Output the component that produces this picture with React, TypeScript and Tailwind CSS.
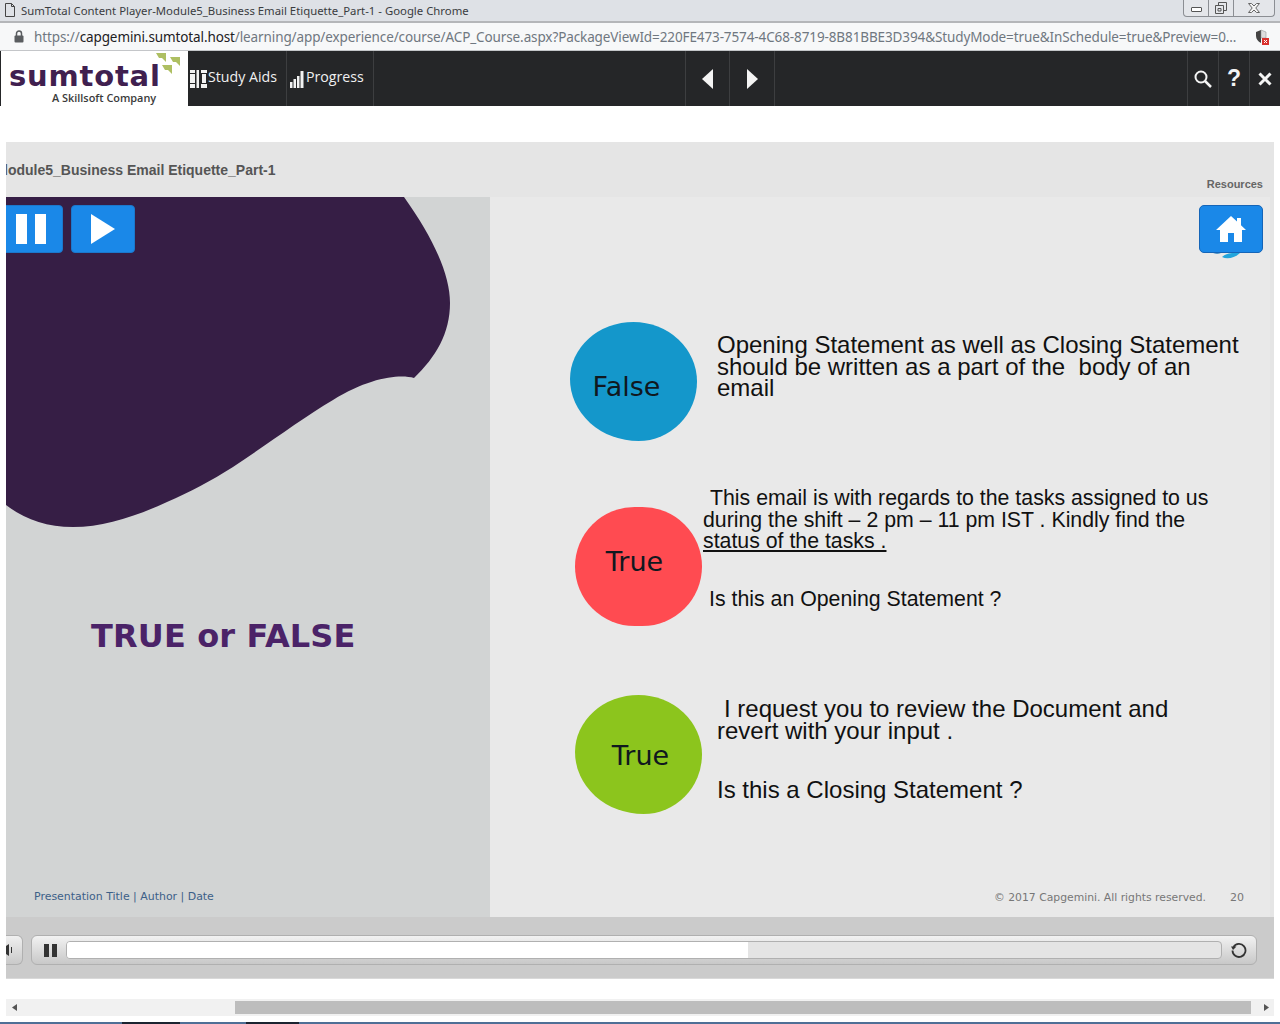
import React from "react";

const Blob = () => (
  <svg className="absolute left-0 top-0" width="484" height="340" viewBox="0 0 484 340">
    <path
      d="M0 0 L398 0 C428 42 444 78 444 106 C444 136 430 160 408 181 C394 177 364 180 327 203 C295 222 262 247 227 270 C205 284 184 295 161 305 C128 320 98 330 67 330 C40 330 18 322 0 308 Z"
      fill="#361e45"
    />
  </svg>
);

const Circle = ({ color, label, shape }: { color: string; label: string; shape: string }) => (
  <div className={`absolute flex items-center justify-center ${color} ${shape}`}>
    <span className="font-['DejaVu_Sans',sans-serif] text-[27px] text-[#10181f]">{label}</span>
  </div>
);

export default function App() {
  return (
    <div className="w-[1280px] h-[1024px] overflow-hidden bg-white flex flex-col relative font-['Open_Sans',sans-serif]">
      {/* title bar */}
      <div className="h-[23px] bg-[#dee1e6] border-b-2 border-[#b4b6b9] flex items-start shrink-0 relative">
        <svg className="ml-[4px] mt-[3px] shrink-0" width="12" height="14" viewBox="0 0 12 14" fill="none" stroke="#444" strokeWidth="1">
          <path d="M1.5 .5H7.5L10.5 3.5V13.5H1.5Z M7.5 .5V3.5H10.5" />
        </svg>
        <span className="ml-[5px] text-[11.35px] leading-[21px] text-[#3a3c3f] font-['Noto_Sans',sans-serif] whitespace-nowrap">
          SumTotal Content Player-Module5_Business Email Etiquette_Part-1 - Google Chrome
        </span>
        <div className="ml-auto mr-[5px] flex h-[17px] w-[92px] border border-t-0 border-[#8b8e93] rounded-b-[4px] bg-[#e4e6ea] shrink-0">
          <div className="w-[25px] border-r border-[#8b8e93] flex items-center justify-center">
            <div className="w-[11px] h-[5px] mt-[3px] border border-[#555] rounded-[1px] bg-white" />
          </div>
          <div className="w-[25px] border-r border-[#8b8e93] flex items-center justify-center">
            <svg width="12" height="12" viewBox="0 0 12 12" fill="none" stroke="#555"><path d="M3.5 3V.5H11.5V8.5H9M.5 3.5H8.5V11.5H.5Z M3 6.5H6V9H3Z" /></svg>
          </div>
          <div className="flex-1 flex items-center justify-center">
            <svg width="12" height="10" viewBox="0 0 12 10" fill="#f4f4f4" stroke="#666"><path d="M.5 .5H3.5L6 3L8.5 .5H11.5L7.8 5L11.5 9.5H8.5L6 7L3.5 9.5H.5L4.2 5Z" /></svg>
          </div>
        </div>
      </div>

      {/* url bar */}
      <div className="h-[28px] bg-[#f7f8f9] border-b border-[#c4c6c9] flex items-center shrink-0">
        <svg className="ml-[14px] shrink-0" width="10" height="13" viewBox="0 0 10 13">
          <path d="M2.5 6V3.5a2.5 2.5 0 0 1 5 0V6" fill="none" stroke="#5a5d60" strokeWidth="1.5" />
          <rect x="0.5" y="5.5" width="9" height="7" rx="1" fill="#5a5d60" />
        </svg>
        <span className="ml-[10px] mt-[2px] text-[13.5px] text-[#6f7780] font-['Noto_Sans',sans-serif] whitespace-nowrap tracking-[-0.11px]">
          https://<span className="text-[#1d2023]">capgemini.sumtotal.host</span>/learning/app/experience/course/ACP_Course.aspx?PackageViewId=220FE473-7574-4C68-8719-8B81BBE3D394&amp;StudyMode=true&amp;InSchedule=true&amp;Preview=0...
        </span>
        <svg className="ml-auto mr-[11px] shrink-0" width="14" height="16" viewBox="0 0 14 16">
          <path d="M6 1L1 3V7C1 10 3 12.5 6 14Z" fill="#444" />
          <path d="M6 1L11 3V9H6Z" fill="#ddd" stroke="#888" strokeWidth=".5" />
          <rect x="7" y="9" width="7" height="7" fill="#d9302c" />
          <path d="M9 11L12 14M12 11L9 14" stroke="#fff" strokeWidth="1" />
        </svg>
      </div>

      {/* nav */}
      <div className="h-[55px] bg-[#252628] flex items-stretch shrink-0 text-white">
        <div className="w-[188px] bg-white border-l border-[#252628] relative shrink-0">
          <span className="absolute left-[8px] top-[4px] text-[#40204f] font-['DejaVu_Sans',sans-serif] font-bold text-[29px] leading-[42px] tracking-[0.8px]">sumtotal</span>
          <svg className="absolute left-[154px] top-[2px]" width="26" height="22" viewBox="0 0 26 22" fill="#aebf62">
            <path d="M1 0H11V9L7 5H4Z M15 4H25V13L21 9H18Z M7 12H17V21L13 17H10Z" />
          </svg>
          <span className="absolute left-[51px] top-[40px] text-[#3a3a3a] font-['Open_Sans',sans-serif] font-semibold text-[10.9px] leading-[14px] whitespace-nowrap">A Skillsoft Company</span>
        </div>
        <div className="w-[99px] border-r border-[#3d3e40] flex items-center pl-[2px] shrink-0">
          <svg width="18" height="18" viewBox="0 0 18 18" fill="#f2f2f2" className="shrink-0">
            <path d="M0 0H5V3H0ZM0 4H5V13H0ZM0 14H5V18H0ZM6.5 0H9V18H6.5ZM11 0H17V3H11ZM12 4H16V13H12ZM11 14H17V18H11Z" />
          </svg>
          <span className="text-[14.2px] leading-[18px] text-[#f0f0f0] -mt-[3px] whitespace-nowrap">Study Aids</span>
        </div>
        <div className="w-[87px] border-r border-[#3d3e40] flex items-center pl-[3px] shrink-0">
          <svg width="15" height="18" viewBox="0 0 15 18" fill="#f2f2f2" className="mt-[1px] shrink-0">
            <path d="M0 12H2.5V18H0ZM3.5 9H6V18H3.5ZM7 6H9.5V18H7ZM10.5 1H13.5V18H10.5Z" />
          </svg>
          <span className="ml-[1px] text-[14.2px] leading-[18px] text-[#f0f0f0] -mt-[3px] whitespace-nowrap">Progress</span>
        </div>
        <div className="w-[312px] border-r border-[#3d3e40] shrink-0" />
        <div className="w-[44px] border-r border-[#3d3e40] flex items-center justify-center shrink-0">
          <svg width="12" height="20" viewBox="0 0 12 20" fill="#f4f4f4"><path d="M11 0V20L0 10Z" /></svg>
        </div>
        <div className="w-[45px] border-r border-[#3d3e40] flex items-center justify-center shrink-0">
          <svg width="12" height="20" viewBox="0 0 12 20" fill="#f4f4f4"><path d="M1 0V20L12 10Z" /></svg>
        </div>
        <div className="flex-1" />
        <div className="w-[31px] border-l border-[#3d3e40] flex items-center justify-center">
          <svg width="18" height="18" viewBox="0 0 18 18" fill="none" stroke="#f4f4f4" strokeWidth="2"><circle cx="7" cy="7" r="5.5" /><path d="M11 11L17 17" strokeWidth="2.5" /></svg>
        </div>
        <div className="w-[31px] border-l border-[#3d3e40] flex items-center justify-center">
          <span className="font-['Liberation_Sans',sans-serif] font-bold text-[23px] leading-none text-[#f4f4f4]">?</span>
        </div>
        <div className="w-[31px] border-l border-[#3d3e40] flex items-center justify-center">
          <svg width="14" height="14" viewBox="0 0 14 14" stroke="#f4f4f4" strokeWidth="3"><path d="M1.5 1.5L12.5 12.5M12.5 1.5L1.5 12.5" /></svg>
        </div>
      </div>

      {/* player */}
      <div className="mt-[36px] ml-[6px] w-[1268px] shrink-0 bg-[#e5e5e5] flex flex-col">
        <div className="h-[55px] relative flex overflow-hidden">
          <span className="mt-[19px] ml-[-2px] font-['Liberation_Sans',sans-serif] font-bold text-[14px] leading-[18px] text-[#555] whitespace-nowrap">
            lodule5_Business Email Etiquette_Part-1
          </span>
          <span className="ml-auto mr-[11px] mt-[35px] font-['Liberation_Sans',sans-serif] font-bold text-[11px] leading-[14px] text-[#666]">Resources</span>
        </div>

        <div className="flex h-[720px] pr-[4px]">
          {/* left */}
          <div className="w-[484px] bg-[#d2d4d4] relative shrink-0 overflow-hidden">
            <Blob />
            <div className="relative flex gap-[8px] pt-[8px] -ml-[7px]">
              <div className="w-[64px] h-[48px] bg-[#1a88e8] border border-[#1b78cc] rounded-[4px] flex items-center justify-center gap-[8px]">
                <div className="w-[11px] h-[30px] bg-white" />
                <div className="w-[11px] h-[30px] bg-white" />
              </div>
              <div className="w-[64px] h-[48px] bg-[#1a88e8] border border-[#1b78cc] rounded-[4px] flex items-center justify-center">
                <svg width="26" height="30" viewBox="0 0 26 30" fill="#fff"><path d="M1 0L25 15L1 30Z" /></svg>
              </div>
            </div>
            <div className="absolute left-[85px] top-[420px] font-['DejaVu_Sans',sans-serif] font-bold text-[32px] leading-[38px] text-[#4b2368] whitespace-nowrap tracking-[0.15px]">
              TRUE or FALSE
            </div>
            <div className="absolute left-[28px] top-[692px] font-['DejaVu_Sans',sans-serif] text-[10.95px] leading-[15px] text-[#3c6088] whitespace-nowrap">
              Presentation Title | Author | Date
            </div>
          </div>

          {/* right */}
          <div className="flex-1 bg-[#e9e9e9] relative font-['Liberation_Sans',sans-serif] text-[#111]">
            <svg className="absolute left-[718px] top-[54px]" width="34" height="10" viewBox="0 0 34 10">
              <path d="M1 0H16C13 3 7 4 1 0Z" fill="#1676b8" />
              <path d="M14 6C18 2 26 1 32 2C28 6 20 9 14 6Z" fill="#22a5dc" />
            </svg>
            <div className="absolute left-[709px] top-[8px] w-[64px] h-[48px] bg-[#1a88e8] border border-[#1565b8] rounded-[5px] flex items-center justify-center">
              <svg width="30" height="28" viewBox="0 0 30 28" fill="#fff"><path d="M15 1L21 6.5V3H25V10.3L30 15H26V27H18V18H12V27H4V15H0Z" /></svg>
            </div>

            <Circle color="bg-[#1497cb]" shape="left-[80px] top-[125px] w-[127px] h-[119px] rounded-[50%_50%_46%_54%/48%_50%_50%_52%] pr-[14px] pt-[11px]" label="False" />
            <div className="absolute left-[227px] top-[137px] text-[24px] leading-[21.5px] whitespace-nowrap">
              <div>Opening Statement as well as Closing Statement</div>
              <div>should be written as a part of the&nbsp; body of an</div>
              <div>email</div>
            </div>

            <Circle color="bg-[#ff4b51]" shape="left-[85px] top-[310px] w-[127px] h-[119px] rounded-full pr-[8px] pb-[9px]" label="True" />
            <div className="absolute left-[213px] top-[291px] text-[21.3px] leading-[21.5px] whitespace-nowrap">
              <div className="pl-[7px]">This email is with regards to the tasks assigned to us</div>
              <div>during the shift – 2 pm – 11 pm IST . Kindly find the</div>
              <div className="underline">status of the tasks .</div>
              <div className="pl-[6px] mt-[36.5px]">Is this an Opening Statement ?</div>
            </div>

            <Circle color="bg-[#8cc51d]" shape="left-[85px] top-[498px] w-[127px] h-[119px] rounded-[50%_50%_46%_54%/48%_50%_50%_52%] pt-[3px] pl-[4px]" label="True" />
            <div className="absolute left-[227px] top-[501px] text-[24px] leading-[21.5px] whitespace-nowrap">
              <div className="pl-[7px]">I request you to review the Document and</div>
              <div>revert with your input .</div>
              <div className="mt-[38px]">Is this a Closing Statement ?</div>
            </div>

            <div className="absolute left-[504px] top-[693px] font-['DejaVu_Sans',sans-serif] text-[10.8px] leading-[16px] text-[#777] whitespace-nowrap">
              © 2017 Capgemini. All rights reserved.
            </div>
            <div className="absolute left-[740px] top-[693px] font-['DejaVu_Sans',sans-serif] text-[11px] leading-[16px] text-[#777]">20</div>
          </div>
        </div>

        {/* controls */}
        <div className="h-[62px] bg-[#cbcbcb] border-b border-[#d9d9d9] flex items-start pt-[18px] overflow-hidden">
          <div className="w-[17px] h-[30px] border border-l-0 border-[#b0b0b0] rounded-r-[6px] bg-gradient-to-b from-[#f0f0f0] to-[#c9c9c9] flex items-center shrink-0">
            <svg width="8" height="12" viewBox="0 0 8 12" fill="#333" className="shrink-0"><path d="M0 2L3 0V12L0 10Z M5 3H6V9H5Z" /></svg>
          </div>
          <div className="ml-[8px] w-[1226px] h-[30px] border border-[#b0b0b0] rounded-[6px] bg-gradient-to-b from-[#f2f2f2] to-[#c8c8c8] flex items-center shrink-0">
            <div className="w-[34px] flex justify-center gap-[3px] pl-[2px] shrink-0">
              <div className="w-[5px] h-[13px] bg-[#333]" />
              <div className="w-[5px] h-[13px] bg-[#333]" />
            </div>
            <div className="w-[1156px] h-[18px] border border-[#b0b0b0] rounded-[4px] bg-[#e4e4e4] overflow-hidden shrink-0">
              <div className="w-[681px] h-full bg-white" />
            </div>
            <div className="flex-1 flex justify-center">
              <svg width="16" height="16" viewBox="0 0 16 16" fill="none" stroke="#333" strokeWidth="1.8">
                <path d="M2.5 5A6.5 6.5 0 1 1 1.5 8.5" />
                <path d="M0 4.5H5.5L2 8Z" fill="#333" stroke="none" />
              </svg>
            </div>
          </div>
        </div>
      </div>

      {/* scrollbar */}
      <div className="mt-[20px] ml-[6px] w-[1268px] h-[17px] bg-[#f1f1f1] flex items-center shrink-0">
        <svg className="ml-[6px] shrink-0" width="5" height="7" viewBox="0 0 5 7" fill="#555"><path d="M5 0V7L0 3.5Z" /></svg>
        <div className="ml-[218px] w-[1016px] h-[13px] bg-[#bdbdbd] shrink-0" />
        <svg className="ml-[13px] shrink-0" width="5" height="7" viewBox="0 0 5 7" fill="#555"><path d="M0 0V7L5 3.5Z" /></svg>
      </div>

      {/* taskbar edge */}
      <div className="mt-[6px] h-[2px] bg-[#4f6f96] flex shrink-0">
        <div className="ml-[122px] w-[58px] bg-[#1b2330]" />
        <div className="ml-[66px] w-[53px] bg-[#1b2330]" />
      </div>
    </div>
  );
}
